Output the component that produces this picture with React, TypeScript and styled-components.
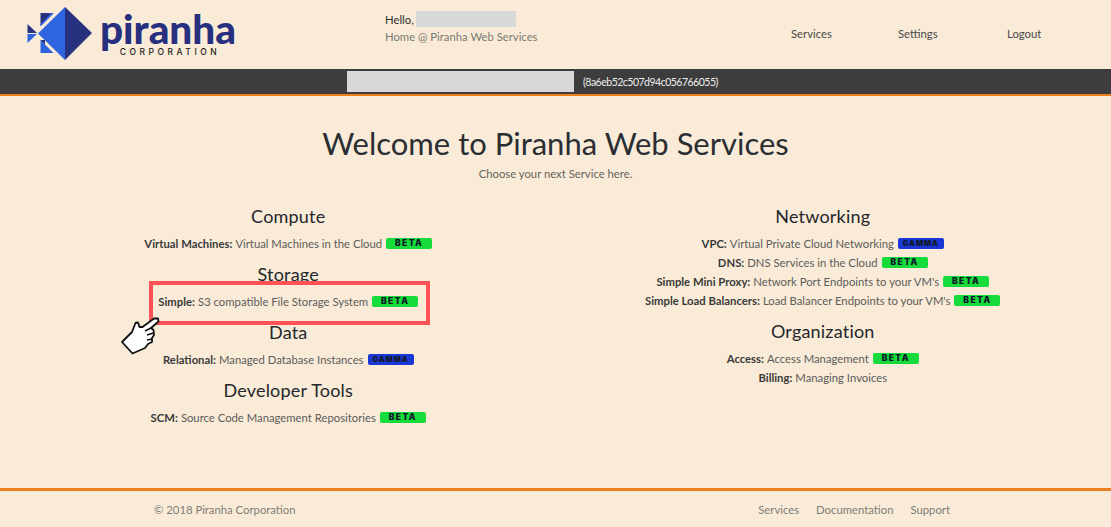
import React from "react";
import styled, { createGlobalStyle } from "styled-components";

const Global = createGlobalStyle`
  html, body { margin: 0; padding: 0; background: #f9ebd7; }
  body { font-family: "Lato", "Noto Sans", sans-serif; font-size: 11.3px; color: #5c5c5c; }
  * { box-sizing: border-box; }
`;

const Page = styled.div`
  position: relative;
  min-height: 527px;
  height: 527px;
  display: flex;
  flex-direction: column;
  overflow: hidden;
`;

const Header = styled.header`
  height: 69px;
  display: flex;
  align-items: stretch;
`;

const LogoLink = styled.div`
  width: 385px;
  padding: 7px 0 0 27px;
  display: flex;
  gap: 9px;
  align-items: flex-start;
`;

const LogoText = styled.div`
  display: flex;
  flex-direction: column;
  align-items: center;
  width: 134px;
  padding-top: 3px;
`;

const LogoName = styled.span`
  font-family: "Lato", sans-serif;
  font-weight: 900;
  font-size: 40.5px;
  line-height: 37px;
  color: #27307f;
`;

const LogoSub = styled.span`
  font-family: "Inter", sans-serif;
  font-weight: 500;
  font-size: 8.5px;
  line-height: 10px;
  color: #222;
  letter-spacing: 3.5px;
  margin-left: 4px;
  white-space: nowrap;
`;

const Greeting = styled.div`
  flex: 1;
  padding-top: 11px;
  display: flex;
  flex-direction: column;
  gap: 2px;
`;

const HelloRow = styled.div`
  display: flex;
  align-items: center;
  gap: 2px;
  height: 16px;
  color: #2f2f2f;
`;

const Redacted = styled.span<{ $w: number; $h: number }>`
  display: inline-block;
  width: ${(p) => p.$w}px;
  height: ${(p) => p.$h}px;
  background: #d8d8d8;
`;

const HomeLine = styled.div`
  line-height: 16px;
  color: #7a7a74;
`;

const Nav = styled.nav`
  display: grid;
  grid-template-columns: 107px 109px 35px;
  padding: 26px 69px 0 0;
  line-height: 16px;
  color: #4a4a4a;
`;

const Bar = styled.div`
  height: 27px;
  background: #3d3d3d;
  border-bottom: 2px solid #ee7f1e;
  display: flex;
  align-items: center;
  padding-left: 347px;
  gap: 9px;
  color: #ededed;
  font-size: 10.5px;
  letter-spacing: -0.5px;
`;

const Main = styled.main`
  flex: 1;
  padding-top: 28px;
`;

const Title = styled.h1`
  margin: 0;
  text-align: center;
  font-family: "Lato", sans-serif;
  font-weight: 400;
  font-size: 31px;
  line-height: 38px;
  color: #2a2e33;
`;

const Subtitle = styled.p`
  margin: 4px 0 0;
  text-align: center;
  line-height: 16px;
  color: #66645f;
`;

const Columns = styled.div`
  margin: 22px 21px 0;
  display: grid;
  grid-template-columns: 1fr 1fr;
`;

const Column = styled.div`
  display: flex;
  flex-direction: column;
  gap: 9px;
`;

const Section = styled.section`
  text-align: center;
`;

const SectionTitle = styled.h2`
  margin: 0 0 6px;
  font-family: "Lato", sans-serif;
  font-weight: 400;
  font-size: 18px;
  letter-spacing: 0.2px;
  line-height: 24px;
  color: #24272b;
`;

const Row = styled.div`
  height: 19px;
  line-height: 19px;
  display: flex;
  justify-content: center;
  align-items: center;
  gap: 3px;
  white-space: nowrap;
`;

const Name = styled.b`
  font-weight: 700;
  color: #3a3a3a;
`;

const Badge = styled.span<{ $kind: "beta" | "gamma" }>`
  display: inline-flex;
  justify-content: center;
  align-items: center;
  width: 46px;
  height: 11px;
  margin-left: 1px;
  border-radius: 2px;
  font-family: "Inter", sans-serif;
  font-size: ${(p) => (p.$kind === "beta" ? "8.5px" : "7.5px")};
  font-weight: 900;
  letter-spacing: ${(p) => (p.$kind === "beta" ? "1.4px" : "0.9px")};
  color: #101a2a;
  background: ${(p) => (p.$kind === "beta" ? "#15dc3b" : "#1a36d6")};
`;

const Footer = styled.footer`
  height: 39px;
  border-top: 3px solid #ee7f1e;
  display: flex;
  justify-content: space-between;
  padding: 11px 161px 0 154px;
  line-height: 16px;
  color: #7d7d77;
`;

const FooterLinks = styled.div`
  display: flex;
  gap: 17px;
`;

const Highlight = styled.div`
  position: absolute;
  left: 149px;
  top: 281px;
  width: 281px;
  height: 44px;
  border: 4px solid #ff5256;
`;

const Hand = styled.svg`
  position: absolute;
  left: 120px;
  top: 315px;
`;

const beta = <Badge $kind="beta">BETA</Badge>;
const gamma = <Badge $kind="gamma">GAMMA</Badge>;

type Item = { name: string; text: string; badge?: React.ReactNode };
type Group = { title: string; items: Item[] };

const left: Group[] = [
  { title: "Compute", items: [{ name: "Virtual Machines:", text: "Virtual Machines in the Cloud", badge: beta }] },
  { title: "Storage", items: [{ name: "Simple:", text: "S3 compatible File Storage System", badge: beta }] },
  { title: "Data", items: [{ name: "Relational:", text: "Managed Database Instances", badge: gamma }] },
  { title: "Developer Tools", items: [{ name: "SCM:", text: "Source Code Management Repositories", badge: beta }] },
];

const right: Group[] = [
  {
    title: "Networking",
    items: [
      { name: "VPC:", text: "Virtual Private Cloud Networking", badge: gamma },
      { name: "DNS:", text: "DNS Services in the Cloud", badge: beta },
      { name: "Simple Mini Proxy:", text: "Network Port Endpoints to your VM's", badge: beta },
      { name: "Simple Load Balancers:", text: "Load Balancer Endpoints to your VM's", badge: beta },
    ],
  },
  {
    title: "Organization",
    items: [
      { name: "Access:", text: "Access Management", badge: beta },
      { name: "Billing:", text: "Managing Invoices" },
    ],
  },
];

const renderGroups = (groups: Group[]) =>
  groups.map((g) => (
    <Section key={g.title}>
      <SectionTitle>{g.title}</SectionTitle>
      {g.items.map((i) => (
        <Row key={i.name}>
          <Name>{i.name}</Name>
          <span>{i.text}</span>
          {i.badge}
        </Row>
      ))}
    </Section>
  ));

export default function App() {
  return (
    <Page>
      <Global />
      <Header>
        <LogoLink>
          <svg width="65" height="54" viewBox="27 8 65 54">
            <polygon points="65,8 65,61 38,34.5" fill="#2f64e0" />
            <polygon points="65,8 92,34 65,61" fill="#27327f" />
            <polygon points="27.5,25 37,34 27.5,34" fill="#27327f" />
            <polygon points="27.5,35 37,35 27.5,44" fill="#2f64e0" />
            <polygon points="40.5,14 53,14 40.5,27" fill="#27327f" />
            <polygon points="43,14 53,14 53.5,14.5 41,27 40.5,27 40.5,25 51,14.5" fill="#2f64e0" />
            <polygon points="40.5,41 53.5,54 40.5,54" fill="#2f64e0" />
            <polygon points="40.5,41 45,45.5 45,41" fill="#27327f" />
          </svg>
          <LogoText>
            <LogoName>piranha</LogoName>
            <LogoSub>CORPORATION</LogoSub>
          </LogoText>
        </LogoLink>
        <Greeting>
          <HelloRow>
            Hello, <Redacted $w={100} $h={16} />
          </HelloRow>
          <HomeLine>Home @ Piranha Web Services</HomeLine>
        </Greeting>
        <Nav>
          <span>Services</span>
          <span>Settings</span>
          <span>Logout</span>
        </Nav>
      </Header>
      <Bar>
        <Redacted $w={227} $h={21} />
        <span>(8a6eb52c507d94c056766055)</span>
      </Bar>
      <Main>
        <Title>Welcome to Piranha Web Services</Title>
        <Subtitle>Choose your next Service here.</Subtitle>
        <Columns>
          <Column>{renderGroups(left)}</Column>
          <Column>{renderGroups(right)}</Column>
        </Columns>
      </Main>
      <Footer>
        <span>© 2018 Piranha Corporation</span>
        <FooterLinks>
          <span>Services</span>
          <span>Documentation</span>
          <span>Support</span>
        </FooterLinks>
      </Footer>
      <Highlight />
      <Hand width="42" height="42" viewBox="0 0 42 42">
        <path
          d="M2 27 L12 17 L15.5 8 L18 7.5 L19.5 12 L22.5 12 L34 3.5 L38 3.5 L38.5 6.5 L31 13 L33.5 15 L34 20 L32 23 L32 27 L28 29 L25 33 L12.5 38.5 Z"
          fill="#fff"
          stroke="#111"
          strokeWidth="1.8"
          strokeLinejoin="round"
        />
        <path d="M31 13 L25 16 M33.5 18 L27 20 M32 24 L27 25" stroke="#111" strokeWidth="1.5" fill="none" />
      </Hand>
    </Page>
  );
}
